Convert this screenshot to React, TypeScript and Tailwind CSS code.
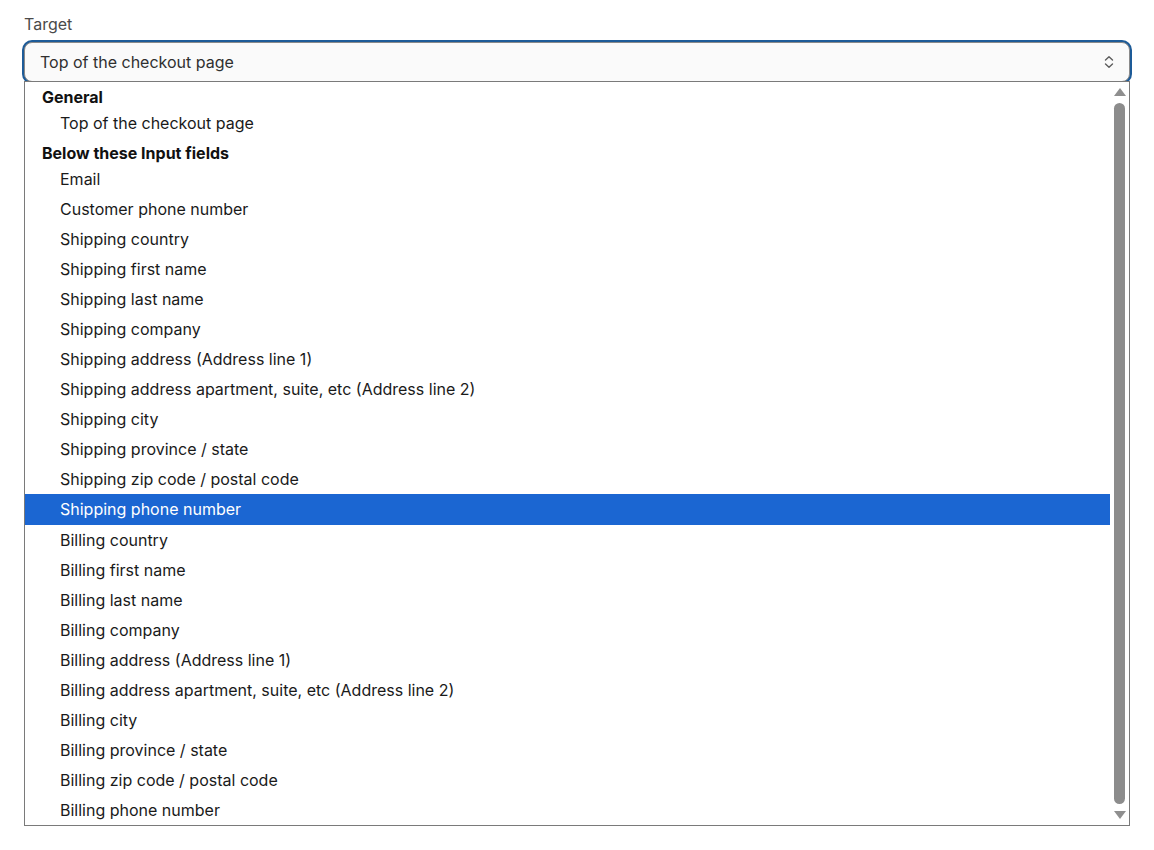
import React from "react";

const items = [
  "Email",
  "Customer phone number",
  "Shipping country",
  "Shipping first name",
  "Shipping last name",
  "Shipping company",
  "Shipping address (Address line 1)",
  "Shipping address apartment, suite, etc (Address line 2)",
  "Shipping city",
  "Shipping province / state",
  "Shipping zip code / postal code",
  "Shipping phone number",
  "Billing country",
  "Billing first name",
  "Billing last name",
  "Billing company",
  "Billing address (Address line 1)",
  "Billing address apartment, suite, etc (Address line 2)",
  "Billing city",
  "Billing province / state",
  "Billing zip code / postal code",
  "Billing phone number",
];

function Item({ label, selected }: { label: string; selected?: boolean }) {
  return (
    <div
      className={
        "flex items-center pl-[35px] text-[16px] " +
        (selected ? "h-[31px] pb-[1px] bg-[#1b66d2] text-white" : "h-[30px] text-[#1a1a1a]")
      }
    >
      {label}
    </div>
  );
}

function Group({ label }: { label: string }) {
  return (
    <div className="h-[26px] pt-[5px] pl-[17px] text-[16px] leading-[20px] font-bold text-[#111]">
      {label}
    </div>
  );
}

export default function App() {
  return (
    <div
      className="w-[1154px] h-[850px] bg-white pl-[24px] pr-[24px] pt-[14px]"
      style={{ fontFamily: "Inter, 'Noto Sans', sans-serif" }}
    >
      <div className="text-[16px] leading-[20px] text-[#4a4a4a]">Target</div>
      <div className="mt-[8px] relative">
        <div className="h-[40px] rounded-[8px] border border-[#8a8a8a] bg-[#fafafa] ring-2 ring-[#1d5b98] flex items-center pl-[15px] pr-[14px] text-[16px] text-[#303030]">
          <span className="flex-1">Top of the checkout page</span>
          <svg width="12" height="14" viewBox="0 0 12 14" fill="none" stroke="#5c5c5c" strokeWidth="1.4" strokeLinecap="round" strokeLinejoin="round">
            <path d="M2.5 5 L6 1.8 L9.5 5" />
            <path d="M2.5 9 L6 12.2 L9.5 9" />
          </svg>
        </div>
        <div className="relative z-10 -mt-[1px] border border-[#7a7a7a] bg-white flex">
          <div className="flex-1">
            <Group label="General" />
            <Item label="Top of the checkout page" />
            <Group label="Below these Input fields" />
            {items.map((it) => (
              <Item key={it} label={it} selected={it === "Shipping phone number"} />
            ))}
          </div>
          <div className="w-[19px] flex flex-col items-center pt-[6px] pb-[6px]">
            <svg width="12" height="8" viewBox="0 0 12 8">
              <path d="M6 0 L12 8 L0 8 Z" fill="#8f8f8f" />
            </svg>
            <div className="mt-[7px] w-[11px] flex-1 rounded-full bg-[#8c8c8c]" />
            <svg width="12" height="8" viewBox="0 0 12 8" className="mt-[7px]">
              <path d="M0 0 L12 0 L6 8 Z" fill="#8f8f8f" />
            </svg>
          </div>
        </div>
      </div>
    </div>
  );
}
